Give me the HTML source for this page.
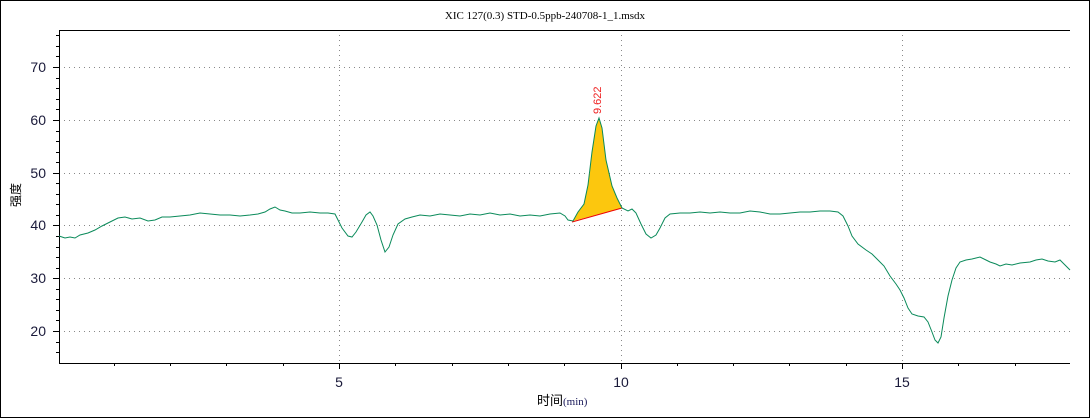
<!DOCTYPE html>
<html><head><meta charset="utf-8"><style>
html,body{margin:0;padding:0;background:#fff}
svg{display:block}
</style></head><body>
<svg width="1090" height="418" xmlns="http://www.w3.org/2000/svg">
<rect x="0.5" y="0.5" width="1089" height="417" fill="#fff" stroke="#000"/>
<text x="545" y="19" font-family="Liberation Serif, serif" font-size="11" text-anchor="middle" fill="#000">XIC 127(0.3) STD-0.5ppb-240708-1_1.msdx</text>
<!-- grid -->
<g stroke="#888" stroke-dasharray="1,4" stroke-width="1">
<line x1="59" y1="67.5" x2="1070" y2="67.5"/>
<line x1="59" y1="120.5" x2="1070" y2="120.5"/>
<line x1="59" y1="173.5" x2="1070" y2="173.5"/>
<line x1="59" y1="225.5" x2="1070" y2="225.5"/>
<line x1="59" y1="278.5" x2="1070" y2="278.5"/>
<line x1="59" y1="331.5" x2="1070" y2="331.5"/>
<line x1="339.5" y1="30" x2="339.5" y2="363"/>
<line x1="621.5" y1="30" x2="621.5" y2="363"/>
<line x1="902.5" y1="30" x2="902.5" y2="363"/>
</g>
<!-- axes -->
<g stroke="#000" stroke-width="1">
<polyline points="59.5,30 59.5,363.5 1070,363.5" fill="none"/>
<line x1="59" y1="30.5" x2="1070" y2="30.5"/>
<line x1="53" y1="67.5" x2="59" y2="67.5"/><line x1="53" y1="120.5" x2="59" y2="120.5"/><line x1="53" y1="173.5" x2="59" y2="173.5"/><line x1="53" y1="225.5" x2="59" y2="225.5"/><line x1="53" y1="278.5" x2="59" y2="278.5"/><line x1="53" y1="331.5" x2="59" y2="331.5"/>
<line x1="56" y1="35.5" x2="59" y2="35.5"/><line x1="56" y1="46.5" x2="59" y2="46.5"/><line x1="56" y1="56.5" x2="59" y2="56.5"/><line x1="56" y1="78.5" x2="59" y2="78.5"/><line x1="56" y1="88.5" x2="59" y2="88.5"/><line x1="56" y1="99.5" x2="59" y2="99.5"/><line x1="56" y1="109.5" x2="59" y2="109.5"/><line x1="56" y1="131.5" x2="59" y2="131.5"/><line x1="56" y1="141.5" x2="59" y2="141.5"/><line x1="56" y1="152.5" x2="59" y2="152.5"/><line x1="56" y1="162.5" x2="59" y2="162.5"/><line x1="56" y1="183.5" x2="59" y2="183.5"/><line x1="56" y1="194.5" x2="59" y2="194.5"/><line x1="56" y1="204.5" x2="59" y2="204.5"/><line x1="56" y1="215.5" x2="59" y2="215.5"/><line x1="56" y1="236.5" x2="59" y2="236.5"/><line x1="56" y1="247.5" x2="59" y2="247.5"/><line x1="56" y1="257.5" x2="59" y2="257.5"/><line x1="56" y1="268.5" x2="59" y2="268.5"/><line x1="56" y1="289.5" x2="59" y2="289.5"/><line x1="56" y1="299.5" x2="59" y2="299.5"/><line x1="56" y1="310.5" x2="59" y2="310.5"/><line x1="56" y1="320.5" x2="59" y2="320.5"/><line x1="56" y1="342.5" x2="59" y2="342.5"/><line x1="56" y1="352.5" x2="59" y2="352.5"/>
<line x1="114.5" y1="363" x2="114.5" y2="366"/><line x1="170.5" y1="363" x2="170.5" y2="366"/><line x1="226.5" y1="363" x2="226.5" y2="366"/><line x1="283.5" y1="363" x2="283.5" y2="366"/><line x1="339.5" y1="363" x2="339.5" y2="369"/><line x1="395.5" y1="363" x2="395.5" y2="366"/><line x1="452.5" y1="363" x2="452.5" y2="366"/><line x1="508.5" y1="363" x2="508.5" y2="366"/><line x1="564.5" y1="363" x2="564.5" y2="366"/><line x1="621.5" y1="363" x2="621.5" y2="369"/><line x1="677.5" y1="363" x2="677.5" y2="366"/><line x1="733.5" y1="363" x2="733.5" y2="366"/><line x1="789.5" y1="363" x2="789.5" y2="366"/><line x1="846.5" y1="363" x2="846.5" y2="366"/><line x1="902.5" y1="363" x2="902.5" y2="369"/><line x1="958.5" y1="363" x2="958.5" y2="366"/><line x1="1015.5" y1="363" x2="1015.5" y2="366"/>
</g>
<g font-family="Liberation Sans, sans-serif" font-size="14" fill="#1a1a3a">
<text x="46" y="72" text-anchor="end">70</text><text x="46" y="125" text-anchor="end">60</text><text x="46" y="178" text-anchor="end">50</text><text x="46" y="230" text-anchor="end">40</text><text x="46" y="283" text-anchor="end">30</text><text x="46" y="336" text-anchor="end">20</text>
<text x="339" y="387" text-anchor="middle">5</text><text x="621" y="387" text-anchor="middle">10</text><text x="902" y="387" text-anchor="middle">15</text>
</g>
<text x="537" y="405" font-family="Liberation Sans, 'Noto Sans CJK SC', sans-serif" font-size="13" fill="#000">时间<tspan font-family="Liberation Serif, serif" font-size="11" fill="#1a1a5a">(min)</tspan></text>
<text transform="translate(20,195) rotate(-90)" font-family="'Noto Sans CJK SC', sans-serif" font-size="12" text-anchor="middle" fill="#000">强度</text>
<!-- peak fill -->
<polygon points="573,221 578,212 584,204 588,185 592,152 596,126 599,118 602,128 606,160 612,186 617,198 622,208" fill="#fcc70e"/>
<line x1="572" y1="222" x2="622" y2="208" stroke="#e00" stroke-width="1"/>
<polyline fill="none" stroke="#0a8a5a" stroke-width="1" points="59,236 65,238 70,237 75,238 80,235 88,233 95,230 102,226 110,222 118,218 125,217 132,219 140,218 148,221 155,220 162,217 170,217 180,216 190,215 200,213 210,214 220,215 230,215 240,216 250,215 258,214 265,212 270,209 275,207 280,210 285,211 292,213 300,213 310,212 320,213 328,213 335,214 338,220 342,228 348,236 352,237 356,232 362,222 366,215 370,212 373,216 377,225 381,240 385,252 389,247 393,235 398,224 405,219 412,217 420,215 430,216 440,214 450,215 460,216 470,214 480,215 490,213 500,215 510,214 520,216 530,215 540,216 550,214 560,213 565,216 568,220 573,221 578,212 584,204 588,185 592,152 596,126 599,118 602,128 606,160 612,186 617,198 622,208 628,211 632,209 636,213 641,224 646,234 651,238 656,235 660,228 665,218 670,214 680,213 690,213 700,212 710,213 720,212 730,213 740,213 750,211 760,212 770,214 780,214 790,213 800,212 810,212 820,211 830,211 838,212 843,216 848,226 852,236 858,244 866,250 872,254 878,260 884,266 890,276 896,284 900,290 904,298 908,308 912,314 918,316 924,317 928,322 932,332 935,340 938,343 941,337 944,318 948,296 952,280 956,268 960,262 966,260 972,259 980,257 986,260 990,262 996,264 1000,266 1006,264 1012,265 1020,263 1030,262 1036,260 1042,259 1048,261 1055,262 1060,260 1064,264 1070,270"/>
<text transform="translate(601,114) rotate(-90)" font-family="Liberation Sans, sans-serif" font-size="11" fill="#e22">9.622</text>
</svg>
</body></html>
